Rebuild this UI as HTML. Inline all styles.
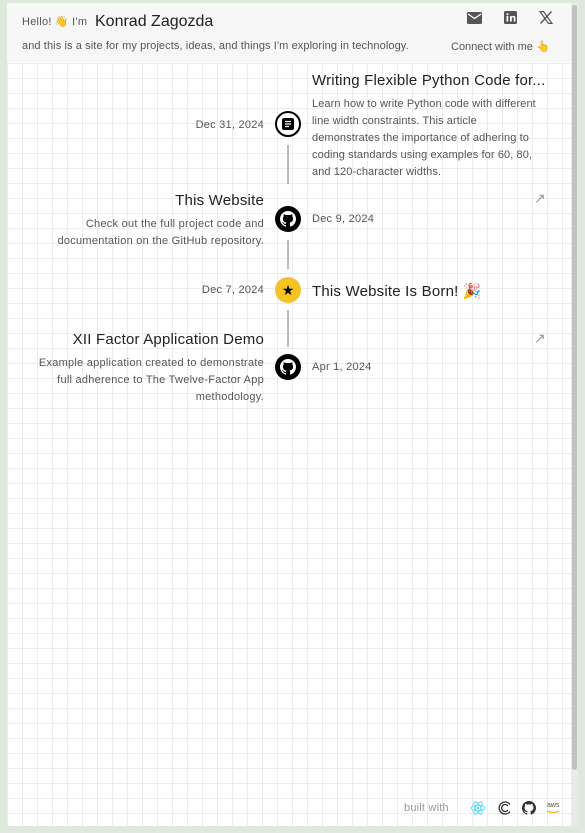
<!DOCTYPE html>
<html><head><meta charset="utf-8"><style>
*{margin:0;padding:0;box-sizing:border-box}
body{width:585px;height:833px;background:#dfe8dc;font-family:"Liberation Sans",sans-serif;position:relative;overflow:hidden}
.panel{position:absolute;left:7px;top:3px;width:564px;height:823px;background-color:#fff;
background-image:linear-gradient(#ececec 1px,transparent 1px),linear-gradient(90deg,#ececec 1px,transparent 1px);background-size:15px 15px;background-position:0 0}
.sb{position:absolute;left:571px;top:3px;width:7px;height:823px;background:#eaeaea}
.sb div{position:absolute;left:1px;top:2px;width:5px;height:765px;background:#c1c1c1;border-radius:3px}
.hdr{position:absolute;left:7px;top:3px;width:564px;height:59px;background:#f7f7f7}
.t{position:absolute;white-space:nowrap}
.g{color:#555;font-size:11px;letter-spacing:.25px}
.h{color:#222;font-size:15px;letter-spacing:.2px}
.d{color:#555;font-size:11px;line-height:17px;letter-spacing:.25px}
.ic{position:absolute;left:275px;width:26px;height:26px;border-radius:50%;background:#000;display:flex;align-items:center;justify-content:center}
.ln{position:absolute;left:287px;width:2px;background:#bbb}
.ar{position:absolute;left:534px;color:#999;font-size:14px}
</style></head><body>
<div class="panel"></div>
<div class="hdr"></div>
<div class="sb"><div></div></div>
<div class="t g" style="left:22px;top:15px">Hello! 👋 I'm</div>
<div class="t" style="left:95px;top:13px;font-size:16px;color:#222">Konrad Zagozda</div>
<div class="t g" style="left:22px;top:40px;letter-spacing:.1px">and this is a site for my projects, ideas, and things I'm exploring in technology.</div>
<div class="t g" style="left:451px;top:40px;letter-spacing:0">Connect with me 👆</div>
<svg class="t" style="left:467px;top:12px" width="15" height="12" viewBox="0 0 15 12"><rect width="15" height="12" rx="1.5" fill="#555"/><path d="M1 2l6.5 4.5L14 2" stroke="#fff" stroke-width="1.3" fill="none"/></svg>
<svg class="t" style="left:504px;top:11px" width="13" height="13" viewBox="0 0 13 13"><rect width="13" height="13" rx="1.5" fill="#555"/><rect x="2.5" y="5" width="1.8" height="5.5" fill="#fff"/><circle cx="3.4" cy="3.2" r="1" fill="#fff"/><path d="M6 5h1.7v1c.5-.8 1.3-1.1 2-1.1 1.3 0 1.8.9 1.8 2.3v3.3H9.8V7.6c0-.8-.2-1.3-.9-1.3s-1.1.5-1.1 1.3v2.9H6z" fill="#fff"/></svg>
<svg class="t" style="left:539px;top:11px" width="14" height="13" viewBox="0 0 14 13"><path d="M1 0.5h3.5l8.5 12h-3.5z" fill="none" stroke="#555" stroke-width="1.2"/><path d="M12.5 0.5L1.5 12.5" stroke="#555" stroke-width="1.3"/></svg>

<div class="t h" style="left:312px;top:72px">Writing Flexible Python Code for...</div>
<div class="t d" style="left:312px;top:96px;letter-spacing:.1px">Learn how to write Python code with different<br>line width constraints. This article<br>demonstrates the importance of adhering to<br>coding standards using examples for 60, 80,<br>and 120-character widths.</div>
<div class="t g" style="right:321px;top:119px">Dec 31, 2024</div>
<div class="ic" style="top:111px;background:#fff;border:2px solid #000"><svg width="14" height="14" viewBox="0 0 14 14"><rect x="1" y="1" width="12" height="12" rx="2" fill="#000"/><path d="M4 4.5h6M4 7h6M4 9.5h4" stroke="#fff" stroke-width="1.3"/></svg></div>
<div class="ln" style="top:145px;height:39px"></div>

<div class="t h" style="right:321px;top:192px">This Website</div>
<div class="t d" style="right:321px;top:216px;text-align:right">Check out the full project code and<br>documentation on the GitHub repository.</div>
<div class="t g" style="left:312px;top:213px">Dec 9, 2024</div>
<div class="ar" style="top:190px">↗</div>
<div class="ic" style="top:206px"><svg width="16" height="16" viewBox="0 0 16 16"><path fill="#fff" d="M8 0C3.58 0 0 3.58 0 8c0 3.54 2.29 6.53 5.47 7.59.4.07.55-.17.55-.38v-1.33c-2.23.48-2.7-1.07-2.7-1.07-.36-.92-.89-1.17-.89-1.17-.73-.5.05-.49.05-.49.8.06 1.23.83 1.23.83.72 1.23 1.870.87 2.33.67.07-.52.28-.87.51-1.07-1.78-.2-3.64-.89-3.64-3.95 0-.87.31-1.59.82-2.15-.08-.2-.36-1.02.08-2.12 0 0 .67-.21 2.2.82a7.6 7.6 0 014 0c1.53-1.04 2.2-.82 2.2-.82.44 1.1.16 1.92.08 2.12.51.56.82 1.27.82 2.15 0 3.07-1.87 3.75-3.65 3.95.29.25.54.73.54 1.48v2.2c0 .21.15.46.55.38A8 8 0 0016 8c0-4.42-3.58-8-8-8z"/></svg></div>
<div class="ln" style="top:240px;height:29px"></div>

<div class="t g" style="right:321px;top:284px">Dec 7, 2024</div>
<div class="ic" style="top:277px;background:#f6c326"><span style="font-size:14px;color:#000">★</span></div>
<div class="t h" style="left:312px;top:282px">This Website Is Born! 🎉</div>
<div class="ln" style="top:310px;height:37px"></div>

<div class="t h" style="right:321px;top:331px">XII Factor Application Demo</div>
<div class="t d" style="right:321px;top:355px;text-align:right">Example application created to demonstrate<br>full adherence to The Twelve-Factor App<br>methodology.</div>
<div class="t g" style="left:312px;top:361px">Apr 1, 2024</div>
<div class="ar" style="top:330px">↗</div>
<div class="ic" style="top:354px"><svg width="16" height="16" viewBox="0 0 16 16"><path fill="#fff" d="M8 0C3.58 0 0 3.58 0 8c0 3.54 2.29 6.53 5.47 7.59.4.07.55-.17.55-.38v-1.33c-2.23.48-2.7-1.07-2.7-1.07-.36-.92-.89-1.17-.89-1.17-.73-.5.05-.49.05-.49.8.06 1.23.83 1.23.83.72 1.23 1.87.87 2.33.67.07-.52.28-.87.51-1.07-1.78-.2-3.64-.89-3.64-3.95 0-.87.31-1.59.82-2.15-.08-.2-.36-1.02.08-2.12 0 0 .67-.21 2.2.82a7.6 7.6 0 014 0c1.53-1.04 2.2-.82 2.2-.82.44 1.1.16 1.92.08 2.12.51.56.82 1.27.82 2.15 0 3.07-1.87 3.75-3.65 3.95.29.25.54.73.54 1.48v2.2c0 .21.15.46.55.38A8 8 0 0016 8c0-4.42-3.58-8-8-8z"/></svg></div>

<div class="t" style="left:404px;top:802px;font-size:11px;color:#999;letter-spacing:.2px">built with</div>
<svg class="t" style="left:470px;top:801px" width="16" height="14" viewBox="0 0 16 14"><g fill="none" stroke="#61dafb" stroke-width="1"><ellipse cx="8" cy="7" rx="7" ry="2.7"/><ellipse cx="8" cy="7" rx="7" ry="2.7" transform="rotate(60 8 7)"/><ellipse cx="8" cy="7" rx="7" ry="2.7" transform="rotate(120 8 7)"/></g><circle cx="8" cy="7" r="1.3" fill="#61dafb"/></svg>
<svg class="t" style="left:498px;top:801px" width="14" height="14" viewBox="0 0 14 14"><path d="M12 3.5A6 6 0 1 0 12 10.5M10 5A3.5 3.5 0 1 0 10 9" fill="none" stroke="#333" stroke-width="1.3"/></svg>
<svg class="t" style="left:522px;top:801px" width="14" height="14" viewBox="0 0 16 16"><path fill="#333" d="M8 0C3.58 0 0 3.58 0 8c0 3.54 2.29 6.53 5.47 7.59.4.07.55-.17.55-.38v-1.33c-2.23.48-2.7-1.07-2.7-1.07-.36-.92-.89-1.17-.89-1.17-.73-.5.05-.49.05-.49.8.06 1.23.83 1.23.83.72 1.23 1.87.87 2.33.67.07-.52.28-.87.51-1.07-1.78-.2-3.64-.89-3.64-3.95 0-.87.31-1.59.82-2.15-.08-.2-.36-1.02.08-2.12 0 0 .67-.21 2.2.82a7.6 7.6 0 014 0c1.53-1.04 2.2-.82 2.2-.82.44 1.1.16 1.92.08 2.12.51.56.82 1.27.82 2.15 0 3.07-1.87 3.75-3.65 3.95.29.25.54.73.54 1.48v2.2c0 .21.15.46.55.38A8 8 0 0016 8c0-4.42-3.58-8-8-8z"/></svg>
<div class="t" style="left:547px;top:802px;font-size:7px;color:#555">aws</div>
<svg class="t" style="left:546px;top:810px" width="14" height="4" viewBox="0 0 14 4"><path d="M1 1q6 3 12 0" stroke="#f90" fill="none" stroke-width="1"/></svg>
</body></html>
